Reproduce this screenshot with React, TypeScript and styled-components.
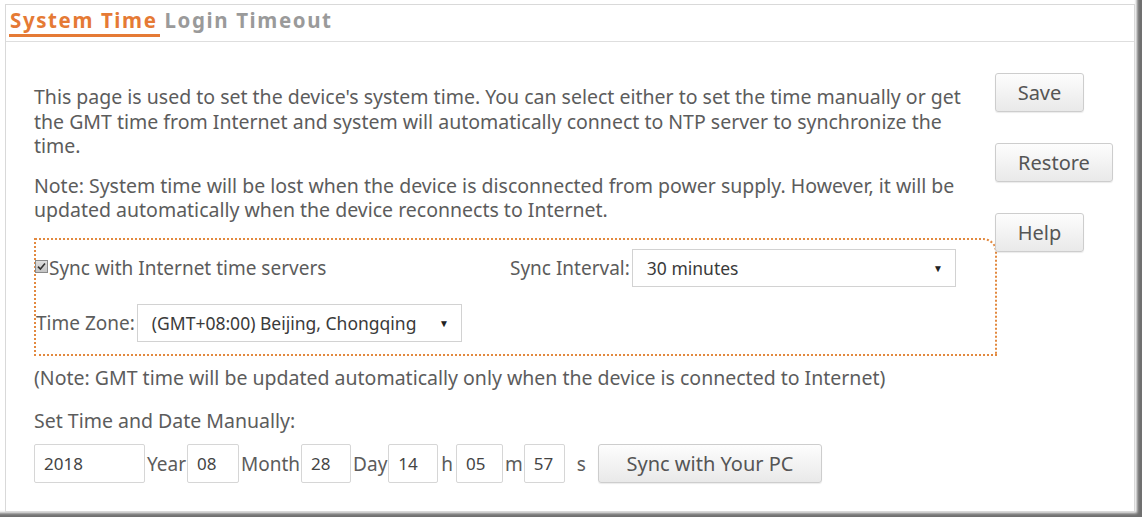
import React from "react";
import styled, { createGlobalStyle } from "styled-components";

const Global = createGlobalStyle`
  html, body { margin: 0; padding: 0; background: #fff; }
  body { font-family: "Noto Sans", "Open Sans", sans-serif; color: #5a5a5a; }
`;

const Stage = styled.div`
  width: 1142px;
  height: 517px;
  box-sizing: border-box;
  padding: 4px 7px 5px 5px;
  background: #fff;
  box-shadow: inset -6px -5px 3px -1px #707070;
  overflow: hidden;
`;

const Frame = styled.div`
  height: 100%;
  box-sizing: border-box;
  border: 1px solid #d9d9d9;
  background: #fff;
  display: flex;
  flex-direction: column;
`;

const Header = styled.div`
  display: flex;
  align-items: flex-start;
  gap: 4px;
  height: 36px;
  padding-left: 3px;
  border-bottom: 1px solid #dedede;
`;

const Tab = styled.div<{ $active?: boolean }>`
  font-size: 20.5px;
  font-weight: 700;
  letter-spacing: 1.6px;
  line-height: 27px;
  padding: 2px 2px 0 1px;
  color: ${(p) => (p.$active ? "#e57a35" : "#9a9a9a")};
  border-bottom: 3px solid ${(p) => (p.$active ? "#e57a35" : "transparent")};
`;

const Body = styled.div`
  display: grid;
  grid-template-columns: 961px auto;
  padding-left: 28px;
`;

const Main = styled.div`
  padding-top: 43px;
  display: flex;
  flex-direction: column;
`;

const Para = styled.p<{ $top?: number }>`
  margin: ${(p) => p.$top ?? 0}px 0 0;
  max-width: 940px;
  font-size: 19.5px;
  line-height: 24.5px;
  color: #5c5c5c;
`;

const SyncBox = styled.div`
  margin-top: 15px;
  width: calc(100% + 2px);
  box-sizing: border-box;
  border: 2px dotted #e2893f;
  border-top-right-radius: 14px;
  padding: 9px 0 12px 0;
  display: flex;
  flex-direction: column;
  gap: 17px;
`;

const BoxRow = styled.div`
  display: grid;
  grid-template-columns: 474px auto;
  align-items: center;
  height: 38px;
`;

const Inline = styled.div`
  display: flex;
  align-items: center;
`;

const Label = styled.span`
  font-size: 19px;
  color: #5c5c5c;
  white-space: nowrap;
`;

const Check = styled.span`
  width: 11px;
  height: 11px;
  margin: 0 1px 3px -1px;
  border: 1px solid #8a8a8a;
  background: linear-gradient(#dedede, #c4c4c4);
  display: inline-flex;
  align-items: center;
  justify-content: center;
`;

const Select = styled.div<{ $w: number }>`
  width: ${(p) => p.$w}px;
  height: 38px;
  margin-left: 2px;
  box-sizing: border-box;
  border: 1px solid #d2d2d2;
  background: #fff;
  display: flex;
  align-items: center;
  padding: 0 12px 0 14px;
  gap: 10px;
  font-size: 17.5px;
  color: #3a3a3a;
`;

const SelectText = styled.span`
  flex: 1;
  overflow: hidden;
  white-space: nowrap;
`;

const Arrow = styled.span`
  font-size: 10px;
  color: #222;
`;

const TimeRow = styled.div`
  margin-top: 11px;
  display: flex;
  align-items: center;
  height: 39px;
`;

const Field = styled.div<{ $w: number }>`
  width: ${(p) => p.$w}px;
  height: 39px;
  box-sizing: border-box;
  border: 1px solid #d6d6d6;
  border-radius: 2px;
  display: flex;
  align-items: center;
  padding-left: 9px;
  font-size: 17px;
  color: #444;
`;

const Unit = styled.span<{ $l?: number; $r?: number }>`
  font-size: 19px;
  color: #5c5c5c;
  padding: 0 ${(p) => p.$r ?? 1}px 0 ${(p) => p.$l ?? 2}px;
`;

const Button = styled.button<{ $w: number }>`
  width: ${(p) => p.$w}px;
  height: 39px;
  border: 1px solid #cdcdcd;
  border-radius: 3px;
  background: linear-gradient(#fdfdfd, #e9e9e9);
  box-shadow: 0 1px 1px rgba(0, 0, 0, 0.08);
  font-family: "Noto Sans", "Open Sans", sans-serif;
  font-size: 20px;
  color: #555;
  padding: 0;
  cursor: pointer;
`;

const Side = styled.div`
  padding-top: 31px;
  display: flex;
  flex-direction: column;
  align-items: flex-start;
  gap: 31px;
`;

export default function App() {
  return (
    <>
      <Global />
      <Stage>
        <Frame>
          <Header>
            <Tab $active>System Time</Tab>
            <Tab>Login Timeout</Tab>
          </Header>
          <Body>
            <Main>
              <Para>
                This page is used to set the device's system time. You can select either to set the time manually or get
                the GMT time from Internet and system will automatically connect to NTP server to synchronize the time.
              </Para>
              <Para $top={15}>
                Note: System time will be lost when the device is disconnected from power supply. However, it will be
                updated automatically when the device reconnects to Internet.
              </Para>
              <SyncBox>
                <BoxRow>
                  <Inline>
                    <Check>
                      <svg width="9" height="9" viewBox="0 0 9 9">
                        <path d="M1 4.6 L3.4 7 L8 1.6" fill="none" stroke="#333" strokeWidth="1.6" />
                      </svg>
                    </Check>
                    <Label>Sync with Internet time servers</Label>
                  </Inline>
                  <Inline>
                    <Label>Sync Interval:</Label>
                    <Select $w={324}>
                      <SelectText>30 minutes</SelectText>
                      <Arrow>▼</Arrow>
                    </Select>
                  </Inline>
                </BoxRow>
                <Inline>
                  <Label>Time Zone:</Label>
                  <Select $w={325}>
                    <SelectText>(GMT+08:00) Beijing, Chongqing</SelectText>
                    <Arrow>▼</Arrow>
                  </Select>
                </Inline>
              </SyncBox>
              <Para $top={10}>
                (Note: GMT time will be updated automatically only when the device is connected to Internet)
              </Para>
              <Para $top={18.5}>Set Time and Date Manually:</Para>
              <TimeRow>
                <Field $w={111}>2018</Field>
                <Unit>Year</Unit>
                <Field $w={52}>08</Field>
                <Unit>Month</Unit>
                <Field $w={50}>28</Field>
                <Unit>Day</Unit>
                <Field $w={50}>14</Field>
                <Unit $l={3} $r={3}>h</Unit>
                <Field $w={47}>05</Field>
                <Unit>m</Unit>
                <Field $w={41}>57</Field>
                <Unit $l={12} $r={12}>s</Unit>
                <Button $w={224}>Sync with Your PC</Button>
              </TimeRow>
            </Main>
            <Side>
              <Button $w={89}>Save</Button>
              <Button $w={118}>Restore</Button>
              <Button $w={89}>Help</Button>
            </Side>
          </Body>
        </Frame>
      </Stage>
    </>
  );
}
